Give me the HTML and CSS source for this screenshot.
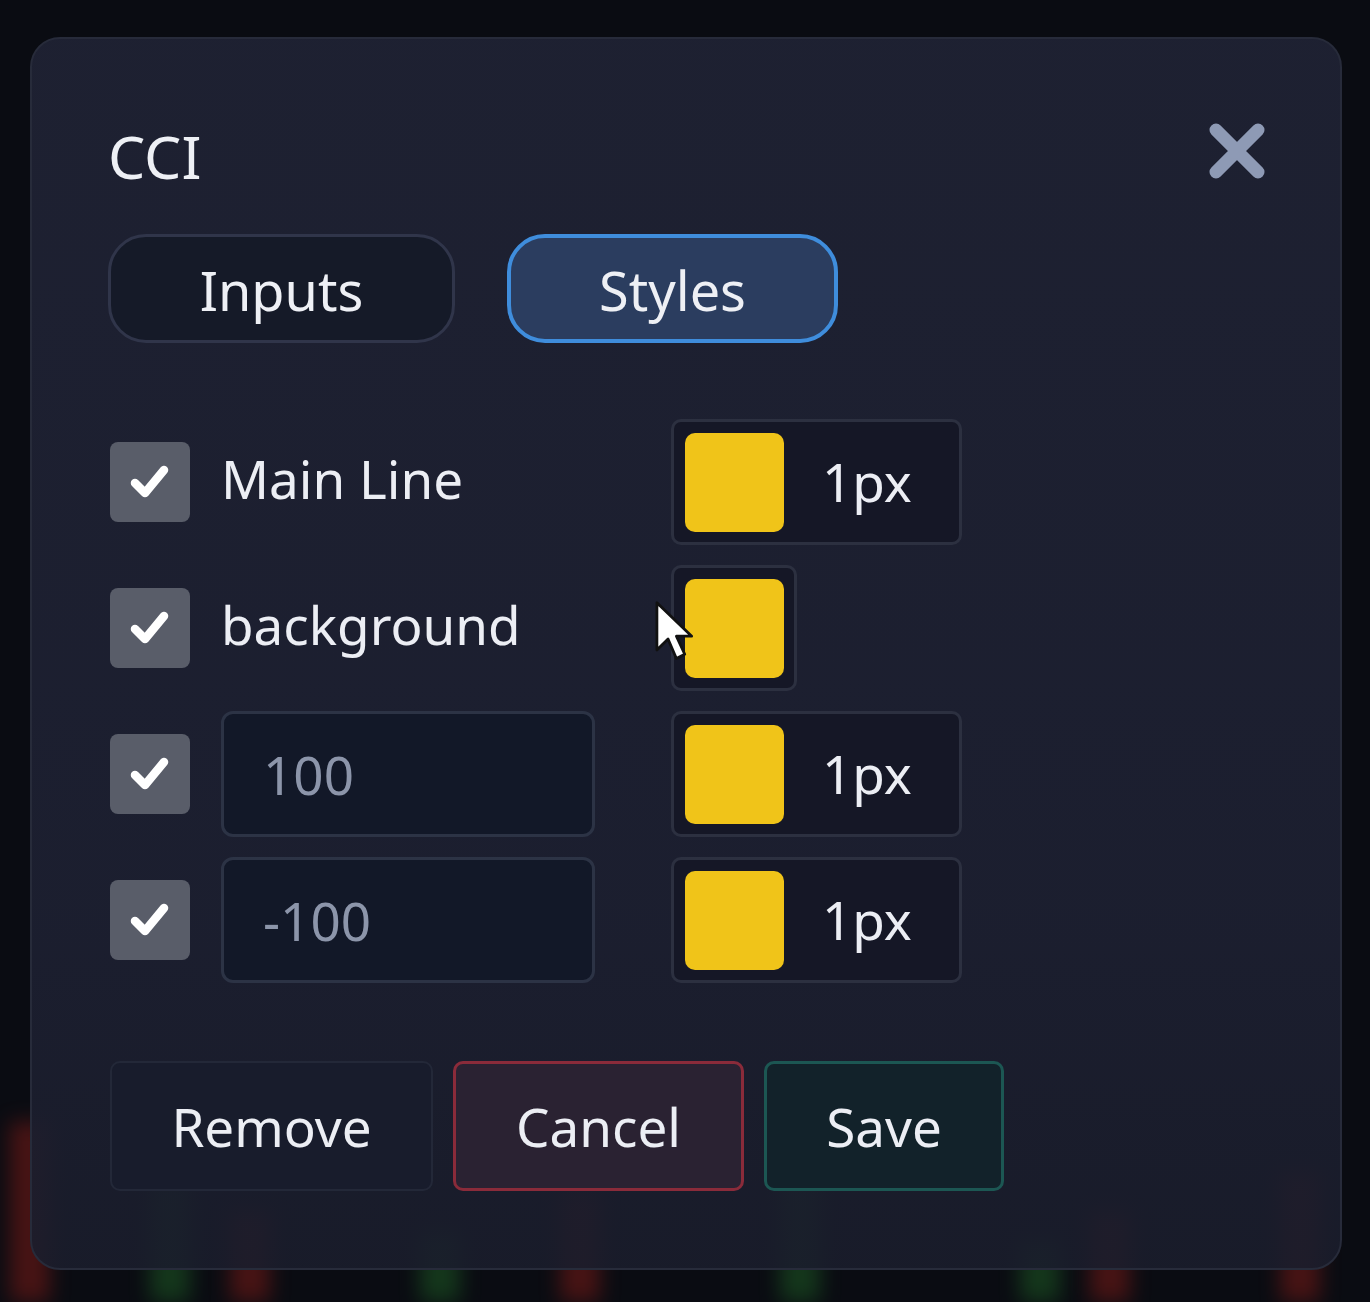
FILE: index.html
```html
<!DOCTYPE html>
<html lang="en">
<head>
<meta charset="utf-8">
<title>CCI</title>
<link rel="stylesheet" href="styles.css">
</head>
<body>
<div class="chart" aria-hidden="true">
  <span class="bar red" style="left:10px;height:180px"></span>
  <span class="bar green" style="left:150px;height:120px"></span>
  <span class="bar red" style="left:230px;height:90px"></span>
  <span class="bar green" style="left:420px;height:70px"></span>
  <span class="bar red" style="left:560px;height:110px"></span>
  <span class="bar green" style="left:780px;height:140px"></span>
  <span class="bar red" style="left:1090px;height:90px"></span>
  <span class="bar red" style="left:1280px;height:130px"></span>
  <span class="bar green" style="left:1020px;height:60px"></span>
</div>
<div class="modal">
  <div class="header">
    <h1 class="title">CCI</h1>
    <button class="close" aria-label="Close">
      <svg viewBox="0 0 60 60" width="60" height="60"><path d="M9 9 L51 51 M51 9 L9 51" stroke="#8e9ab5" stroke-width="13" stroke-linecap="round"/></svg>
    </button>
  </div>
  <div class="tabs">
    <button class="tab">Inputs</button>
    <button class="tab active">Styles</button>
  </div>
  <div class="rows">
    <div class="row">
      <span class="check"><svg viewBox="0 0 40 40" width="40" height="40"><path d="M5 21 L15 31 L34 8" fill="none" stroke="#fff" stroke-width="8.5" stroke-linecap="round" stroke-linejoin="round"/></svg></span>
      <span class="label">Main Line</span>
      <div class="style-box"><span class="swatch"></span><span class="px">1px</span></div>
    </div>
    <div class="row">
      <span class="check"><svg viewBox="0 0 40 40" width="40" height="40"><path d="M5 21 L15 31 L34 8" fill="none" stroke="#fff" stroke-width="8.5" stroke-linecap="round" stroke-linejoin="round"/></svg></span>
      <span class="label">background</span>
      <div class="style-box short"><span class="swatch"></span>
        <svg class="cursor" viewBox="0 0 30 46" width="42" height="64"><path d="M2 2 L2 36 L10 28 L16 42 L22 39 L16 26 L27 26 Z" fill="#fff" stroke="#111" stroke-width="2" stroke-linejoin="round"/></svg>
      </div>
    </div>
    <div class="row">
      <span class="check"><svg viewBox="0 0 40 40" width="40" height="40"><path d="M5 21 L15 31 L34 8" fill="none" stroke="#fff" stroke-width="8.5" stroke-linecap="round" stroke-linejoin="round"/></svg></span>
      <div class="input">100</div>
      <div class="style-box"><span class="swatch"></span><span class="px">1px</span></div>
    </div>
    <div class="row">
      <span class="check"><svg viewBox="0 0 40 40" width="40" height="40"><path d="M5 21 L15 31 L34 8" fill="none" stroke="#fff" stroke-width="8.5" stroke-linecap="round" stroke-linejoin="round"/></svg></span>
      <div class="input">-100</div>
      <div class="style-box"><span class="swatch"></span><span class="px">1px</span></div>
    </div>
  </div>
  <div class="actions">
    <button class="btn remove">Remove</button>
    <button class="btn cancel">Cancel</button>
    <button class="btn save">Save</button>
  </div>
</div>
</body>
</html>
```
FILE: styles.css
```css
* { box-sizing: border-box; }
html, body { margin: 0; padding: 0; }
body {
  width: 1370px;
  height: 1302px;
  background: #0a0c12;
  font-family: "Noto Sans", "Open Sans", sans-serif;
  color: #eceef4;
  position: relative;
  overflow: hidden;
  padding: 37px 28px 0 30px;
}
.chart {
  position: absolute;
  left: 0; right: 0; bottom: 0;
  height: 260px;
  pointer-events: none;
}
.bar {
  position: absolute;
  bottom: 0;
  width: 40px;
  filter: blur(10px);
  opacity: .55;
}
.bar.red { background: #7a1a16; }
.bar.green { background: #1d5a24; }
.modal {
  position: relative;
  width: 1312px;
  height: 1233px;
  border-radius: 30px;
  border: 2px solid #272b3a;
  background: linear-gradient(180deg, rgba(30,33,50,.98) 0%, rgba(28,31,48,.97) 70%, rgba(26,29,44,.9) 100%);
  padding: 78px 76px 0 76px;
  display: flex;
  flex-direction: column;
}
.header {
  display: flex;
  align-items: center;
  justify-content: space-between;
  height: 72px;
}
.title {
  margin: 0;
  font-size: 59px;
  font-weight: 400;
  line-height: 1;
  color: #eef0f5;
  padding-top: 6px;
}
.close {
  background: none;
  border: 0;
  padding: 0;
  width: 60px;
  height: 60px;
  margin-right: -3px;
  margin-top: -4px;
  display: block;
}
.close svg { display: block; }
.tabs {
  display: flex;
  gap: 52px;
  margin-top: 45px;
}
.tab {
  height: 109px;
  border-radius: 38px;
  font-family: inherit;
  font-size: 54px;
  color: #eef0f5;
  background: #151a28;
  border: 3px solid #30354a;
  width: 347px;
  padding: 2px 0 0;
}
.tab.active {
  width: 331px;
  background: #2b3d5f;
  border: 4px solid #3f8ddc;
}
.rows {
  margin-top: 76px;
  display: flex;
  flex-direction: column;
  gap: 20px;
}
.row {
  display: flex;
  align-items: center;
  height: 126px;
}
.check {
  width: 80px;
  height: 80px;
  border-radius: 8px;
  background: #595d69;
  display: flex;
  align-items: center;
  justify-content: center;
  margin-left: 2px;
  flex: none;
}
.check svg { display: block; }
.label {
  margin-left: 31px;
  font-size: 53px;
  width: 450px;
  color: #eceef4;
  padding-bottom: 8px;
}
.input {
  margin-left: 31px;
  width: 374px;
  height: 126px;
  border-radius: 12px;
  background: #121828;
  border: 3px solid #2c3345;
  font-size: 53px;
  color: #8c95aa;
  padding-left: 39px;
  display: flex;
  align-items: center;
  padding-bottom: 0;
  margin-right: 76px;
}
.style-box {
  position: relative;
  width: 291px;
  height: 126px;
  border-radius: 10px;
  background: #151726;
  border: 3px solid #2c3040;
  display: flex;
  align-items: center;
  padding-left: 11px;
}
.style-box.short { width: 126px; }
.swatch {
  width: 99px;
  height: 99px;
  border-radius: 10px;
  background: #f0c419;
  flex: none;
}
.px {
  margin-left: 38px;
  font-size: 53px;
  color: #eceef4;
  padding-bottom: 2px;
}
.cursor {
  position: absolute;
  left: -20px;
  top: 32px;
}
.actions {
  display: flex;
  gap: 20px;
  margin-top: 78px;
}
.btn {
  height: 130px;
  border-radius: 10px;
  font-family: inherit;
  font-size: 53px;
  color: #eceef4;
  padding: 0;
}
.remove {
  width: 323px;
  background: #181c2c;
  border: 2px solid #232838;
  margin-left: 2px;
}
.cancel {
  width: 291px;
  background: #2a2232;
  border: 3px solid #8a2b3a;
}
.save {
  width: 240px;
  background: #12222a;
  border: 3px solid #1c5753;
}
```
